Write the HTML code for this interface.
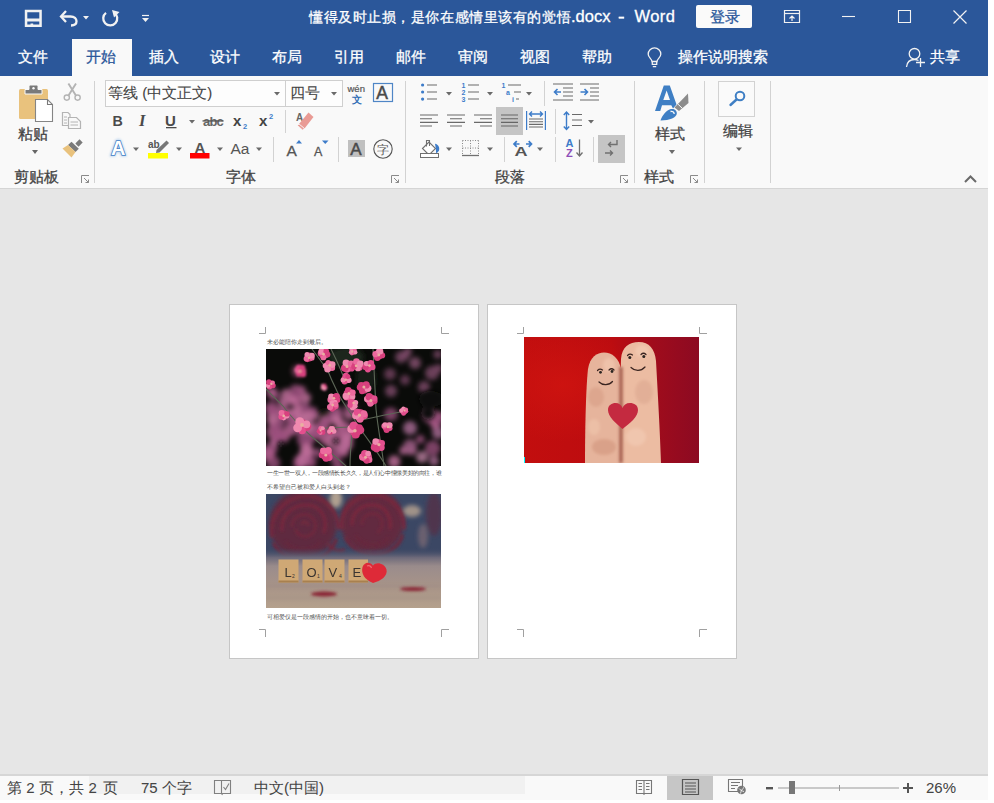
<!DOCTYPE html>
<html><head><meta charset="utf-8">
<style>
*{margin:0;padding:0;box-sizing:border-box}
html,body{width:994px;height:803px;overflow:hidden;background:#fff}
body{font-family:"Liberation Sans",sans-serif;position:relative}
.a{position:absolute}
.t{position:absolute;white-space:nowrap;line-height:1;-webkit-text-stroke-width:0.3px}
#tb{left:0;top:0;width:988px;height:76px;background:#2B579A}
.tab{color:#fff;font-size:15px;top:48.5px}
#rib{left:0;top:76px;width:988px;height:112px;background:#F9F9F9}
#ribline{left:0;top:188px;width:988px;height:1px;background:#D5D5D5}
#doc{left:0;top:189px;width:988px;height:585px;background:#E6E6E6}
#sbline{left:0;top:774px;width:988px;height:2px;background:#D6D6D6}
#sb{left:0;top:776px;width:988px;height:24px;background:#F9F9F9}
.lbl{color:#444;font-size:15px}
.sep{background:#D4D4D4;width:1px}
.dd{width:0;height:0;border-left:3px solid transparent;border-right:3px solid transparent;border-top:4px solid #666}
.page{background:#fff;border:1px solid #C6C6C6}
.cm{border-color:#8a8a8a;border-style:solid}
.pt{font-size:6px;color:#4a4a4a;line-height:1;-webkit-text-stroke-width:0}
.st{color:#444;font-size:15px;-webkit-text-stroke-width:0.05px}
svg{position:absolute;overflow:visible}
</style></head><body>

<!-- Title bar -->
<div id="tb" class="a"></div>
<div class="a" style="left:72px;top:39px;width:60px;height:37px;background:#F9F9F9"></div>
<div class="t tab" style="left:18px">文件</div>
<div class="t tab" style="left:86px;color:#2B579A">开始</div>
<div class="t tab" style="left:149px">插入</div>
<div class="t tab" style="left:210px">设计</div>
<div class="t tab" style="left:272px">布局</div>
<div class="t tab" style="left:334px">引用</div>
<div class="t tab" style="left:396px">邮件</div>
<div class="t tab" style="left:458px">审阅</div>
<div class="t tab" style="left:520px">视图</div>
<div class="t tab" style="left:582px">帮助</div>
<div class="t tab" style="left:678px">操作说明搜索</div>
<div class="t tab" style="left:929.5px">共享</div>
<div class="t" style="left:309px;top:10px;color:#fff;font-size:14px;letter-spacing:0.56px">懂得及时止损，是你在感情里该有的觉悟</div>
<div class="t" style="left:571px;top:8px;color:#fff;font-size:16.5px">.docx</div>
<div class="t" style="left:618px;top:8px;color:#fff;font-size:16.5px;transform:scaleX(1.25);transform-origin:0 0">-</div>
<div class="t" style="left:634.5px;top:8px;color:#fff;font-size:16.5px;letter-spacing:0.4px">Word</div>
<div class="a" style="left:696px;top:5px;width:56px;height:23px;background:#FAFAFA;border-radius:2px"></div>
<div class="t" style="left:710px;top:9px;color:#2B579A;font-size:15px">登录</div>

<!-- Ribbon -->
<div id="rib" class="a"></div>
<div id="ribline" class="a"></div>

<!-- Ribbon text -->
<div class="t lbl" style="left:18px;top:126px">粘贴</div>
<div class="t lbl" style="left:14px;top:169px">剪贴板</div>
<div class="t lbl" style="left:226px;top:169px">字体</div>
<div class="t lbl" style="left:495px;top:169px">段落</div>
<div class="t lbl" style="left:655px;top:126px">样式</div>
<div class="t lbl" style="left:644px;top:169px">样式</div>
<div class="t lbl" style="left:723px;top:123px">编辑</div>
<div class="a" style="left:105px;top:80px;width:181px;height:27px;background:#FDFDFD;border:1px solid #CFCFCF"></div>
<div class="a" style="left:285px;top:80px;width:58px;height:27px;background:#FDFDFD;border:1px solid #CFCFCF"></div>
<div class="t lbl" style="left:108px;top:85px;color:#444;-webkit-text-stroke-width:0.1px">等线 (中文正文)</div>
<div class="t lbl" style="left:290px;top:85px;color:#444;-webkit-text-stroke-width:0.1px">四号</div>
<div class="a" style="left:496px;top:107px;width:27px;height:28px;background:#C5C5C5"></div>
<div class="a" style="left:598px;top:135px;width:27px;height:28px;background:#C5C5C5"></div>
<div class="a" style="left:348px;top:140px;width:17px;height:17px;background:#C0C0C0"></div>
<div class="a" style="left:718px;top:81px;width:37px;height:36px;border:1px solid #D2D2D2;background:#FAFAFA"></div>


<svg width="994" height="803" style="left:0;top:0">
<!-- QAT icons -->
<g fill="none" stroke="#F2F2F2">
 <path d="M66 11L61 16.5L66 22" stroke-width="2.3"/>
 <path d="M61.5 16.5H70.5C74.5 16.5 76.5 18.8 76.5 21.3C76.5 23.8 74.5 25.5 71 25.5" stroke-width="2.3"/>
 <path d="M114.2 12.6A7 7 0 1 1 106 12.8" stroke-width="2.3"/>
 <path d="M142 15.5H149" stroke-width="1.2"/>
 <path d="M842 16.5H855" stroke-width="1.1"/>
 <path d="M898.5 10.5H910.5V22.5H898.5Z" stroke-width="1.1"/>
 <path d="M953.5 10.5L966.5 23.5M966.5 10.5L953.5 23.5" stroke-width="1.2"/>
 <path d="M784.5 10.5H799.5V22.5H784.5Z" stroke-width="1.2"/>
 <path d="M785 13.5H799" stroke-width="1.2"/>
 <path d="M792 21V16.5M789.5 18.5L792 16L794.5 18.5" stroke-width="1.2"/>
 <path d="M652 61.5C652 59 648.2 57.5 648.2 54.2A6.3 6.3 0 1 1 660.8 54.2C660.8 57.5 657 59 657 61.5Z" stroke-width="1.3"/>
 <path d="M652.3 61.5V64.3H656.7V61.5M652.8 66.6H656.2" stroke-width="1.3"/>
 <circle cx="914.5" cy="53.8" r="5.3" stroke-width="1.3"/>
 <path d="M906.5 67C907 62 910.5 59.5 914.5 59.5C916 59.5 917.5 60 918.5 60.5" stroke-width="1.3"/>
 <path d="M916 62.5H925M920.5 58V67" stroke-width="1.3"/>
</g>
<path d="M112 10L119.5 12L114 17.5Z" fill="#F2F2F2"/>
<path fill-rule="evenodd" fill="#F2F2F2" d="M24.8 9.8H41.8V27H24.8ZM27.3 12.3V18.6H39.3V12.3ZM27.3 21.4V24.5H30.5V23.5H33.2V24.5H39.3V21.4Z"/>
<path d="M83 16H89L86 19.5Z" fill="#F2F2F2"/>
<path d="M142 18H149L145.5 22Z" fill="#F2F2F2"/>

<!-- Clipboard group -->
<rect x="19" y="89" width="29" height="30" rx="1.5" fill="#E9C27D"/>
<path d="M25 89.5V94H42V89.5H38V86.5C38 85.5 37 85 36 85H31C30 85 29 85.5 29 86.5V89.5Z" fill="#7A7A7A" stroke="#F9F9F9" stroke-width="1"/>
<circle cx="33.5" cy="88.3" r="1.2" fill="#F9F9F9"/>
<path d="M35.5 99.5H47.5L52.5 104.5V121.5H35.5Z" fill="#fff" stroke="#858585" stroke-width="1.1"/>
<path d="M47.5 99.5V104.5H52.5" fill="none" stroke="#7A7A7A" stroke-width="1.1"/>
<path d="M32 150H38L35 154Z" fill="#666"/>
<g fill="none" stroke="#B4B4B4" stroke-width="1.4">
 <circle cx="66.8" cy="97.6" r="2.6"/><circle cx="77.6" cy="97.6" r="2.6"/>
 <path d="M68.5 95.5L76 83.5M75.9 95.5L68.4 83.5" stroke-width="1.9"/>
 <path d="M62.5 112.5H68L70 114.5V125.5H62.5Z" stroke-width="1.2"/>
 <path d="M68.5 117.5H76.5L80.5 121.5V128.5H68.5Z" fill="#F9F9F9" stroke-width="1.2"/>
 <path d="M64 117H67M64 120H67M64 123H67M70.5 122H78M70.5 125H78" stroke-width="1"/>
</g>
<path d="M68 145L71.5 141.8L78.8 148.8L75.5 152Z" fill="#7A7A7A"/>
<path d="M79.5 139.3L82.7 142.5L78.5 146.7L75.3 143.5Z" fill="#7A7A7A"/>
<path d="M62.5 148.5L68 145L75.5 152L71.5 157.5Z" fill="#E9C27D"/>

<!-- launchers -->
<g fill="none" stroke="#8A8A8A" stroke-width="1">
 <path d="M81.5 183V175.5H89M84 178L88.5 182.5M88.5 179.5V182.5H85.5"/>
 <path d="M391.5 183V175.5H399M394 178L398.5 182.5M398.5 179.5V182.5H395.5"/>
 <path d="M620.5 183V175.5H628M623 178L627.5 182.5M627.5 179.5V182.5H624.5"/>
 <path d="M690.5 183V175.5H698M693 178L697.5 182.5M697.5 179.5V182.5H694.5"/>
</g>

<!-- separators -->
<g fill="#D2D2D2">
 <rect x="94" y="81" width="1" height="102"/>
 <rect x="405" y="81" width="1" height="102"/>
 <rect x="634" y="81" width="1" height="102"/>
 <rect x="704" y="81" width="1" height="102"/>
 <rect x="770" y="81" width="1" height="102"/>
 <rect x="285" y="110" width="1" height="23"/>
 <rect x="273" y="137" width="1" height="25"/>
 <rect x="338" y="137" width="1" height="25"/>
 <rect x="544" y="81" width="1" height="25"/>
 <rect x="555" y="109" width="1" height="25"/>
 <rect x="504" y="137" width="1" height="25"/>
 <rect x="555" y="137" width="1" height="25"/>
 <rect x="593" y="137" width="1" height="25"/>
</g>

<!-- dropdown arrows -->
<g fill="#6A6A6A">
 <path d="M274 92H280L277 95.5Z"/>
 <path d="M331 92H337L334 95.5Z"/>
 <path d="M189 120H195L192 123.5Z"/>
 <path d="M133 147.5H139L136 151Z"/>
 <path d="M176 147.5H182L179 151Z"/>
 <path d="M217 147.5H223L220 151Z"/>
 <path d="M256 147.5H262L259 151Z"/>
 <path d="M446 92H452L449 95.5Z"/>
 <path d="M487 92H493L490 95.5Z"/>
 <path d="M526 92H532L529 95.5Z"/>
 <path d="M588 120H594L591 123.5Z"/>
 <path d="M446 147.5H452L449 151Z"/>
 <path d="M487 147.5H493L490 151Z"/>
 <path d="M537 147.5H543L540 151Z"/>
 <path d="M669 150H675L672 154Z"/>
 <path d="M736 147.5H742L739 151Z"/>
 <path d="M965 182L970.5 176.5L976 182" fill="none" stroke="#6A6A6A" stroke-width="2"/>
</g>

<!-- Font group icons -->
<text x="347.5" y="92" font-family="Liberation Sans" font-size="9.5" fill="#555" stroke="#555" stroke-width="0.2">wén</text>
<text x="352" y="102.5" font-size="10" fill="#2F6DB5" font-weight="bold">文</text>
<rect x="373.5" y="83.5" width="19" height="18" fill="none" stroke="#4F86C6" stroke-width="1.2"/>
<text x="376.3" y="99.3" font-family="Liberation Sans" font-size="17.5" fill="#4a4a4a" stroke="#4a4a4a" stroke-width="0.5">A</text>
<text x="112.6" y="125.7" font-family="Liberation Sans" font-weight="bold" font-size="15.5" fill="#4a4a4a" transform="translate(112.6 0) scale(0.92 1) translate(-112.6 0)">B</text>
<text x="139" y="125.7" font-family="Liberation Serif" font-style="italic" font-weight="bold" font-size="16.5" fill="#4a4a4a">I</text>
<text x="165" y="125.7" font-family="Liberation Sans" font-weight="bold" font-size="15" fill="#4a4a4a">U</text>
<rect x="166" y="127" width="10.5" height="1.3" fill="#4a4a4a"/>
<text x="203" y="125.5" font-family="Liberation Sans" font-weight="bold" font-size="13" fill="#666" letter-spacing="-0.8">abc</text>
<rect x="202.5" y="120.3" width="21" height="1.3" fill="#555"/>
<text x="233" y="125.5" font-family="Liberation Sans" font-weight="bold" font-size="15" fill="#444">x</text>
<text x="243" y="128.5" font-family="Liberation Sans" font-weight="bold" font-size="7.5" fill="#3D7CC9">2</text>
<text x="259" y="125.5" font-family="Liberation Sans" font-weight="bold" font-size="15" fill="#444">x</text>
<text x="269" y="118.5" font-family="Liberation Sans" font-weight="bold" font-size="7.5" fill="#3D7CC9">2</text>
<!-- eraser -->
<text x="296" y="121" font-family="Liberation Sans" font-weight="bold" font-size="10" fill="#666">A</text>
<path d="M308.5 112.5L313.5 117L304.5 128.5L299 124Z" fill="#E99A94"/>
<path d="M299 124L304.5 128.5L302.5 130L297.5 125.5Z" fill="#E99A94" stroke="#F9F9F9" stroke-width="0.8"/>
<!-- text effects A -->
<defs><filter id="glow" x="-50%" y="-50%" width="200%" height="200%"><feGaussianBlur stdDeviation="1.2"/></filter></defs>
<text x="111" y="155" font-family="Liberation Sans" font-weight="bold" font-size="20" fill="#BFD6EE" stroke="#BFD6EE" stroke-width="3" filter="url(#glow)">A</text>
<text x="111" y="155" font-family="Liberation Sans" font-weight="bold" font-size="20" fill="#FFFFFF" stroke="#3F7DC6" stroke-width="1.5" style="paint-order:stroke">A</text>
<!-- highlighter -->
<text x="148" y="147.5" font-family="Liberation Sans" font-weight="bold" font-size="10" fill="#555">ab</text>
<path d="M166.5 140.5L169 143L159.5 152.5L156 153L156.5 150Z" fill="#777"/>
<rect x="148" y="153" width="20" height="5.5" fill="#FFFF00"/>
<!-- font color -->
<text x="194.5" y="152.5" font-family="Liberation Sans" font-weight="bold" font-size="15" fill="#555">A</text>
<rect x="190" y="153" width="19.5" height="5.5" fill="#FF0000"/>
<text x="230.5" y="154" font-family="Liberation Sans" font-size="15.5" fill="#555">Aa</text>
<!-- grow / shrink -->
<text x="286.5" y="155.5" font-family="Liberation Sans" font-size="15.5" fill="#555" stroke="#555" stroke-width="0.3">A</text>
<path d="M296 143.5H302L299 140Z" fill="#3D7CC9"/>
<text x="314" y="155.5" font-family="Liberation Sans" font-size="12.5" fill="#555" stroke="#555" stroke-width="0.3">A</text>
<path d="M322 140.5H328.5L325.25 144Z" fill="#3D7CC9"/>
<text x="350.3" y="155" font-family="Liberation Sans" font-size="17" fill="#4a4a4a" stroke="#4a4a4a" stroke-width="0.5">A</text>
<circle cx="383" cy="149" r="9.2" fill="none" stroke="#555" stroke-width="1.1"/>
<text x="377" y="153.5" font-size="12" fill="#555">字</text>

<!-- Paragraph group icons -->
<g fill="#3D7CC9">
 <circle cx="422.6" cy="85" r="1.6"/><circle cx="422.6" cy="92" r="1.6"/><circle cx="422.6" cy="99.1" r="1.6"/>
</g>
<g fill="none" stroke="#6a6a6a" stroke-width="1.15">
 <path d="M427 85H437M427 92H437M427 99H437"/>
 <path d="M468 85H479M468 92H479M468 99H479"/>
 <path d="M508 85H521M514 92H521M516 99H519"/>
 <path d="M553 84H573M563 88H573M563 92H573M563 96H573M553 100H573"/>
 <path d="M580 84H599M590 88H599M590 92H599M590 96H599M580 100H599"/>
 <path d="M420 115H438M420 118.7H432M420 122.4H438M420 126H432"/>
 <path d="M447 115H465M450 118.7H462M447 122.4H465M450 126H462"/>
 <path d="M474 115H492M480 118.7H492M474 122.4H492M480 126H492"/>
 <path d="M501 115H518M501 118.7H518M501 122.4H518M501 126H518" stroke="#666"/>
 <path d="M529 119H543M529 121.7H543M529 124.4H543M529 127H543"/>
 <path d="M572 114.5H582M572 120H582M572 125.5H582"/>
</g>
<g font-family="Liberation Sans" font-weight="bold" font-size="7" fill="#3D7CC9">
 <text x="461.5" y="88">1</text><text x="461.5" y="95">2</text><text x="461.5" y="102">3</text>
 <text x="501.5" y="88">1</text><text x="506" y="95">a</text><text x="512" y="102">i</text>
</g>
<g fill="none" stroke="#3D7CC9" stroke-width="1.6">
 <path d="M561 92H554.5M557.5 89L554.5 92L557.5 95"/>
 <path d="M580.5 92H587.5M584.5 89L587.5 92L584.5 95"/>
 <path d="M526.6 111V130M545.4 111V130" stroke-width="1.2"/>
 <path d="M529.5 114H542.5M532 111.5L529.5 114L532 116.5M540 111.5L542.5 114L540 116.5" stroke-width="1.4"/>
 <path d="M566.5 112V129.5M563.8 115L566.5 112L569.2 115M563.8 126.5L566.5 129.5L569.2 126.5" stroke-width="1.4"/>
 <path d="M514 144H519.5M516.8 141.2L514 144L516.8 146.8M526 144H531.5M528.7 141.2L531.5 144L528.7 146.8" stroke-width="1.7"/>
</g>
<!-- shading -->
<path d="M422.5 148.5L429 142L435.5 148.5L429 155Z" fill="#fff" stroke="#707070" stroke-width="1.1"/>
<path d="M426.5 146.5V140.5H429.5V146" fill="none" stroke="#707070" stroke-width="1.1"/>
<path d="M435 143.8C438.5 144.3 440.2 148 438.8 151L436.2 153.8L435.8 148.5Z" fill="#3D7CC9"/>
<rect x="420.5" y="153.5" width="18" height="4" fill="#fff" stroke="#707070" stroke-width="1"/>
<!-- borders -->
<g fill="none" stroke="#8A8A8A" stroke-width="1" stroke-dasharray="1 1.5">
 <path d="M462.5 140.5H478.5M462.5 148H478.5M462.5 140.5V155M470.5 140.5V155M478.5 140.5V155"/>
</g>
<path d="M462 155.5H479" stroke="#707070" stroke-width="1.3"/>
<!-- asian layout -->
<text x="514.5" y="156" font-family="Liberation Sans" font-weight="bold" font-size="12.5" fill="#555" transform="translate(514.5 0) scale(1.45 1) translate(-514.5 0)">A</text>
<!-- sort -->
<text x="565.5" y="147.3" font-family="Liberation Sans" font-weight="bold" font-size="11" fill="#3D7CC9">A</text>
<text x="566" y="157.2" font-family="Liberation Sans" font-weight="bold" font-size="11" fill="#8E4EB8">Z</text>
<path d="M579.5 139.5V156M576.5 152.5L579.5 156L582.5 152.5" fill="none" stroke="#707070" stroke-width="1.3"/>
<!-- show marks -->
<path d="M617 140V144.5H608.5M611 142L608.5 144.5L611 147" fill="none" stroke="#707070" stroke-width="1.4"/>
<path d="M605 153H612.5M610 150.5L612.5 153L610 155.5" fill="none" stroke="#707070" stroke-width="1.4"/>

<!-- Styles -->
<path fill-rule="evenodd" d="M655 111L663.8 85.4H669.8L676.5 104.5L673 108.5L671.3 105.3H662L660.3 111Z M663.3 100L666.6 90.5L670 100Z" fill="#3F7FC4"/>
<path d="M688 93.5L688.5 103L679 111L674.5 107.5Z" fill="#8C8C8C"/>
<path d="M678 104.2L682.2 108.2" stroke="#F9F9F9" stroke-width="1"/>
<path d="M660.5 120.5C662 116 665.5 111 669.5 109.5C673.5 108 677 110 676.8 113.5C676.5 117.5 670 120.5 660.5 120.5Z" fill="#3F7FC4"/>
<path d="M670.5 111.5C672.5 111 674 112 674.2 114" stroke="#F9F9F9" stroke-width="1.3" fill="none"/>
<!-- editing magnifier -->
<circle cx="740" cy="96" r="4.3" fill="none" stroke="#3F7FC4" stroke-width="2"/>
<path d="M736.5 99.5L730.5 105" stroke="#3F7FC4" stroke-width="2.4" stroke-linecap="round"/>
</svg>

<!-- Document area -->
<div id="doc" class="a"></div>
<div class="a page" style="left:229px;top:304px;width:250px;height:355px"></div>
<div class="a page" style="left:487px;top:304px;width:250px;height:355px"></div>

<!-- Page contents -->
<svg width="994" height="803" style="left:0;top:0">
<g fill="none" stroke="#A0A0A0" stroke-width="1">
 <path d="M259 333.5H265.5V327"/>
 <path d="M441.5 327V333.5H449"/>
 <path d="M259 629.5H265.5V637" />
 <path d="M441.5 637V629.5H449"/>
 <path d="M517 333.5H523.5V327"/>
 <path d="M699.5 327V333.5H707"/>
 <path d="M517 629.5H523.5V637"/>
 <path d="M699.5 637V629.5H707"/>
</g>
</svg>

<!-- Photo 1: plum blossoms -->
<svg viewBox="0 0 175 117" style="left:266px;top:349px;overflow:hidden" width="175" height="117">
<defs><filter id="pb1" x="-50%" y="-50%" width="200%" height="200%"><feGaussianBlur stdDeviation="2.6"/></filter><filter id="pb2" x="-50%" y="-50%" width="200%" height="200%"><feGaussianBlur stdDeviation="1.2"/></filter><filter id="pb3" x="-50%" y="-50%" width="200%" height="200%"><feGaussianBlur stdDeviation="0.45"/></filter></defs>
<rect width="175" height="117" fill="#0a0b09"/>
<g filter="url(#pb1)"><ellipse cx="80" cy="8" rx="18" ry="10" fill="#1a281c"/><ellipse cx="100" cy="30" rx="10" ry="14" fill="#131c14"/><ellipse cx="60" cy="70" rx="10" ry="10" fill="#14140f"/></g>
<g filter="url(#pb1)">
<circle cx="27.5" cy="66.9" r="6.6" fill="#ad5c8a" opacity="0.85"/>
<circle cx="69.8" cy="63.6" r="6.3" fill="#b86a96" opacity="0.85"/>
<circle cx="18.2" cy="63.1" r="5.7" fill="#9a4f7c" opacity="0.85"/>
<circle cx="7.7" cy="83.0" r="7.3" fill="#ad5c8a" opacity="0.85"/>
<circle cx="80.5" cy="95.2" r="6.3" fill="#ad5c8a" opacity="0.85"/>
<circle cx="49.1" cy="81.4" r="7.9" fill="#ad5c8a" opacity="0.85"/>
<circle cx="47.3" cy="65.9" r="5.7" fill="#b86a96" opacity="0.85"/>
<circle cx="10.0" cy="76.2" r="7.3" fill="#9a4f7c" opacity="0.85"/>
<circle cx="8.8" cy="91.7" r="4.8" fill="#ad5c8a" opacity="0.85"/>
<circle cx="46.6" cy="61.7" r="4.2" fill="#9a4f7c" opacity="0.85"/>
<circle cx="42.2" cy="89.4" r="7.1" fill="#8e4a74" opacity="0.85"/>
<circle cx="49.8" cy="84.7" r="5.2" fill="#9a4f7c" opacity="0.85"/>
<circle cx="59.4" cy="72.4" r="6.3" fill="#b86a96" opacity="0.85"/>
<circle cx="42.1" cy="78.3" r="5.8" fill="#b86a96" opacity="0.85"/>
<circle cx="83.3" cy="65.0" r="5.7" fill="#bc6c98" opacity="0.85"/>
<circle cx="12.9" cy="86.8" r="4.2" fill="#ad5c8a" opacity="0.85"/>
<circle cx="65.0" cy="91.8" r="7.5" fill="#bc6c98" opacity="0.85"/>
<circle cx="28.9" cy="78.7" r="6.0" fill="#8e4a74" opacity="0.85"/>
<circle cx="5.8" cy="63.5" r="5.1" fill="#ad5c8a" opacity="0.85"/>
<circle cx="5.2" cy="99.4" r="6.6" fill="#8e4a74" opacity="0.85"/>
<circle cx="24.2" cy="80.8" r="6.7" fill="#ad5c8a" opacity="0.85"/>
<circle cx="80.0" cy="79.0" r="6.4" fill="#8e4a74" opacity="0.85"/>
<circle cx="5.0" cy="103.3" r="4.5" fill="#9a4f7c" opacity="0.85"/>
<circle cx="33.8" cy="112.1" r="6.0" fill="#9a4f7c" opacity="0.85"/>
<circle cx="38.2" cy="90.4" r="7.5" fill="#8e4a74" opacity="0.85"/>
<circle cx="73.4" cy="74.4" r="5.7" fill="#bc6c98" opacity="0.85"/>
<circle cx="58.0" cy="80.4" r="4.9" fill="#ad5c8a" opacity="0.85"/>
<circle cx="15.0" cy="71.7" r="4.9" fill="#8e4a74" opacity="0.85"/>
<circle cx="70.6" cy="68.8" r="5.1" fill="#9a4f7c" opacity="0.85"/>
<circle cx="35.6" cy="79.8" r="6.3" fill="#9a4f7c" opacity="0.85"/>
<circle cx="58.7" cy="88.4" r="6.5" fill="#ad5c8a" opacity="0.85"/>
<circle cx="38.8" cy="109.4" r="7.8" fill="#b86a96" opacity="0.85"/>
<circle cx="33.4" cy="81.5" r="4.4" fill="#8e4a74" opacity="0.85"/>
<circle cx="5.3" cy="62.0" r="4.8" fill="#9a4f7c" opacity="0.85"/>
<circle cx="9.3" cy="93.4" r="4.4" fill="#b86a96" opacity="0.85"/>
<circle cx="12.9" cy="64.0" r="5.5" fill="#ad5c8a" opacity="0.85"/>
<circle cx="6.0" cy="70.3" r="5.5" fill="#bc6c98" opacity="0.85"/>
<circle cx="81.2" cy="93.5" r="5.9" fill="#ad5c8a" opacity="0.85"/>
<circle cx="72.2" cy="116.6" r="5.9" fill="#8e4a74" opacity="0.85"/>
<circle cx="26.5" cy="66.5" r="7.0" fill="#bc6c98" opacity="0.85"/>
<circle cx="40.7" cy="98.8" r="6.1" fill="#9a4f7c" opacity="0.85"/>
<circle cx="80.8" cy="89.2" r="4.6" fill="#b86a96" opacity="0.85"/>
<circle cx="77.7" cy="102.7" r="5.2" fill="#ad5c8a" opacity="0.85"/>
<circle cx="59.2" cy="73.4" r="5.5" fill="#9a4f7c" opacity="0.85"/>
<circle cx="30.2" cy="71.1" r="6.2" fill="#b86a96" opacity="0.85"/>
<circle cx="28.0" cy="71.2" r="7.2" fill="#9a4f7c" opacity="0.85"/>
<circle cx="68.5" cy="106.3" r="7.0" fill="#9a4f7c" opacity="0.85"/>
<circle cx="17.0" cy="87.1" r="6.9" fill="#ad5c8a" opacity="0.85"/>
<circle cx="67.2" cy="85.9" r="4.8" fill="#b86a96" opacity="0.85"/>
<circle cx="81.3" cy="84.4" r="7.7" fill="#bc6c98" opacity="0.85"/>
<circle cx="81.2" cy="79.5" r="4.9" fill="#9a4f7c" opacity="0.85"/>
<circle cx="40.0" cy="77.9" r="5.9" fill="#b86a96" opacity="0.85"/>
<circle cx="71.4" cy="86.3" r="6.6" fill="#ad5c8a" opacity="0.85"/>
<circle cx="70.9" cy="65.1" r="5.6" fill="#9a4f7c" opacity="0.85"/>
<circle cx="40.6" cy="68.5" r="7.2" fill="#bc6c98" opacity="0.85"/>
<circle cx="7.4" cy="113.8" r="6.9" fill="#8e4a74" opacity="0.85"/>
<circle cx="34.1" cy="113.9" r="6.9" fill="#9a4f7c" opacity="0.85"/>
<circle cx="84.4" cy="59.6" r="6.4" fill="#8e4a74" opacity="0.85"/>
<circle cx="68.6" cy="66.6" r="7.3" fill="#8e4a74" opacity="0.85"/>
<circle cx="55.9" cy="78.7" r="6.2" fill="#9a4f7c" opacity="0.85"/>
<circle cx="1.8" cy="105.2" r="6.9" fill="#ad5c8a" opacity="0.85"/>
<circle cx="44.8" cy="113.1" r="5.7" fill="#9a4f7c" opacity="0.85"/>
<circle cx="70.2" cy="70.5" r="5.0" fill="#bc6c98" opacity="0.85"/>
<circle cx="42.6" cy="103.1" r="5.3" fill="#b86a96" opacity="0.85"/>
<circle cx="35.6" cy="65.7" r="7.6" fill="#bc6c98" opacity="0.85"/>
<circle cx="76.3" cy="97.1" r="7.3" fill="#b86a96" opacity="0.85"/>
<circle cx="35.8" cy="112.1" r="6.0" fill="#b86a96" opacity="0.85"/>
<circle cx="12.9" cy="88.1" r="7.5" fill="#9a4f7c" opacity="0.85"/>
<circle cx="51.7" cy="103.8" r="4.6" fill="#9a4f7c" opacity="0.85"/>
<circle cx="40.2" cy="100.8" r="6.2" fill="#bc6c98" opacity="0.85"/>
<circle cx="27.3" cy="51.7" r="5.4" fill="#ad5c8a" opacity="0.85"/>
<circle cx="35.3" cy="41.3" r="4.6" fill="#ad5c8a" opacity="0.85"/>
<circle cx="30.9" cy="51.2" r="5.7" fill="#ad5c8a" opacity="0.85"/>
<circle cx="17.7" cy="53.5" r="5.5" fill="#b86a96" opacity="0.85"/>
<circle cx="8.0" cy="46.1" r="5.5" fill="#8e4a74" opacity="0.85"/>
<circle cx="20.3" cy="45.4" r="5.6" fill="#bc6c98" opacity="0.85"/>
<circle cx="36.9" cy="59.6" r="4.6" fill="#8e4a74" opacity="0.85"/>
<circle cx="5.5" cy="42.7" r="5.3" fill="#ad5c8a" opacity="0.85"/>
<circle cx="26.8" cy="49.4" r="4.6" fill="#bc6c98" opacity="0.85"/>
<circle cx="31.4" cy="59.7" r="4.5" fill="#bc6c98" opacity="0.85"/>
<circle cx="5.7" cy="59.4" r="6.9" fill="#9a4f7c" opacity="0.85"/>
<circle cx="29.9" cy="42.1" r="6.7" fill="#9a4f7c" opacity="0.85"/>
<circle cx="39.6" cy="58.3" r="4.5" fill="#8e4a74" opacity="0.85"/>
<circle cx="39.8" cy="48.9" r="5.3" fill="#bc6c98" opacity="0.85"/>
<circle cx="137.5" cy="101.7" r="4.1" fill="#b86a96" opacity="0.85"/>
<circle cx="145.2" cy="100.7" r="5.5" fill="#b86a96" opacity="0.85"/>
<circle cx="154.3" cy="90.2" r="4.3" fill="#9a4f7c" opacity="0.85"/>
<circle cx="173.4" cy="67.8" r="5.1" fill="#ad5c8a" opacity="0.85"/>
<circle cx="169.8" cy="72.0" r="7.0" fill="#8e4a74" opacity="0.85"/>
<circle cx="166.7" cy="99.2" r="7.8" fill="#8e4a74" opacity="0.85"/>
<circle cx="128.2" cy="112.6" r="6.3" fill="#bc6c98" opacity="0.85"/>
<circle cx="124.9" cy="65.2" r="6.8" fill="#8e4a74" opacity="0.85"/>
<circle cx="169.2" cy="76.8" r="4.1" fill="#ad5c8a" opacity="0.85"/>
<circle cx="164.1" cy="66.6" r="7.4" fill="#ad5c8a" opacity="0.85"/>
<circle cx="141.9" cy="2.4" r="4.0" fill="#84506e" opacity="0.85"/>
<circle cx="171.7" cy="5.4" r="4.3" fill="#7a4866" opacity="0.85"/>
<circle cx="172.2" cy="19.4" r="4.5" fill="#7a4866" opacity="0.85"/>
<circle cx="139.1" cy="6.2" r="4.6" fill="#7a4866" opacity="0.85"/>
<circle cx="135.0" cy="8.0" r="6.0" fill="#7a4866" opacity="0.85"/>
<circle cx="149.0" cy="14.0" r="6.0" fill="#84506e" opacity="0.85"/>
<circle cx="166.0" cy="24.0" r="7.0" fill="#7a4866" opacity="0.85"/>
<circle cx="124.0" cy="25.0" r="6.0" fill="#6e3f5c" opacity="0.85"/>
<circle cx="125.0" cy="42.0" r="6.0" fill="#7a4866" opacity="0.85"/>
<circle cx="139.0" cy="31.0" r="5.0" fill="#6e3f5c" opacity="0.85"/>
<circle cx="158.0" cy="38.0" r="6.0" fill="#7a4866" opacity="0.85"/>
<circle cx="144.0" cy="79.0" r="7.0" fill="#a36890" opacity="0.85"/>
<circle cx="144.0" cy="97.0" r="7.0" fill="#94587e" opacity="0.85"/>
<circle cx="172.0" cy="84.0" r="6.0" fill="#a36890" opacity="0.85"/>
<circle cx="156.0" cy="108.0" r="6.0" fill="#b07898" opacity="0.85"/>
<circle cx="168.0" cy="112.0" r="5.0" fill="#a36890" opacity="0.85"/>
<circle cx="32.0" cy="22.0" r="6.0" fill="#9a4a70" opacity="0.85"/>
</g>
<g filter="url(#pb1)" fill="#0d0c0b"><circle cx="15" cy="95" r="3"/><circle cx="70" cy="92" r="3"/><circle cx="162" cy="64" r="7"/><ellipse cx="165" cy="50" rx="12" ry="8"/></g>
<g fill="none" stroke="#5c6656" stroke-width="1.1" stroke-linecap="round" filter="url(#pb3)">
<path d="M0 40C8 48 14 54 17 57C25 68 35 78 45 87C58 98 70 108 80 117"/>
<path d="M46 0C52 8 58 16 62 22C65 30 68 36 70 40C74 50 82 60 88 70C96 84 110 100 120 117"/>
<path d="M65 0C70 10 76 22 80 35"/>
<path d="M107 0C108 20 109 40 110 60C112 80 116 100 118 117"/>
<path d="M84 117C84 105 85 95 86 85"/>
<path d="M58 79C66 79 75 78 83 78"/>
<path d="M95 71C110 68 122 65 135 63"/>
</g>
<g filter="url(#pb3)">
<circle cx="43" cy="8" r="4.6" fill="#d44a82"/>
<circle cx="46.0" cy="8.9" r="2.6" fill="#ec6a9e"/>
<circle cx="41.5" cy="10.8" r="2.4" fill="#d8407e"/>
<circle cx="40.4" cy="9.8" r="2.8" fill="#ec6a9e"/>
<circle cx="41.0" cy="5.6" r="2.5" fill="#f08ab0"/>
<circle cx="45.9" cy="6.7" r="2.9" fill="#f08ab0"/>
<circle cx="43.1" cy="8.8" r="1.3" fill="#e8b0a0"/>
</g>
<g filter="url(#pb2)">
<circle cx="35" cy="22" r="5.1" fill="#d44a82"/>
<circle cx="37.0" cy="24.9" r="3.2" fill="#d8407e"/>
<circle cx="32.8" cy="24.7" r="2.8" fill="#d8407e"/>
<circle cx="31.6" cy="21.1" r="3.0" fill="#ec6a9e"/>
<circle cx="33.1" cy="19.1" r="3.3" fill="#e4508e"/>
<circle cx="36.1" cy="18.7" r="3.0" fill="#d8407e"/>
<circle cx="34.1" cy="22.3" r="1.4" fill="#e8b0a0"/>
</g>
<g filter="url(#pb3)">
<circle cx="4.5" cy="35.5" r="4.1" fill="#d44a82"/>
<circle cx="7.1" cy="36.6" r="2.6" fill="#d8407e"/>
<circle cx="3.4" cy="38.1" r="2.5" fill="#e4508e"/>
<circle cx="2.0" cy="36.8" r="2.2" fill="#f08ab0"/>
<circle cx="2.9" cy="33.1" r="2.8" fill="#d8407e"/>
<circle cx="6.7" cy="33.6" r="2.2" fill="#ec6a9e"/>
<circle cx="5.3" cy="34.9" r="1.1" fill="#e8b0a0"/>
</g>
<g filter="url(#pb3)">
<circle cx="58" cy="5" r="5.1" fill="#d44a82"/>
<circle cx="61.4" cy="5.6" r="3.0" fill="#d8407e"/>
<circle cx="57.4" cy="8.4" r="2.9" fill="#ec6a9e"/>
<circle cx="54.6" cy="4.5" r="2.9" fill="#e4508e"/>
<circle cx="55.4" cy="2.7" r="3.1" fill="#f08ab0"/>
<circle cx="60.3" cy="2.4" r="2.9" fill="#d8407e"/>
<circle cx="57.5" cy="5.2" r="1.4" fill="#e8b0a0"/>
</g>
<g filter="url(#pb3)">
<circle cx="63" cy="17" r="5.1" fill="#d44a82"/>
<circle cx="66.0" cy="18.8" r="3.2" fill="#ec6a9e"/>
<circle cx="61.6" cy="20.2" r="3.3" fill="#f08ab0"/>
<circle cx="59.5" cy="16.7" r="2.8" fill="#f08ab0"/>
<circle cx="62.2" cy="13.6" r="2.7" fill="#ec6a9e"/>
<circle cx="66.2" cy="15.6" r="3.3" fill="#f08ab0"/>
<circle cx="63.6" cy="16.3" r="1.4" fill="#e8b0a0"/>
</g>
<g filter="url(#pb3)">
<circle cx="82" cy="17" r="5.5" fill="#d44a82"/>
<circle cx="85.3" cy="18.9" r="3.6" fill="#e4508e"/>
<circle cx="81.0" cy="20.7" r="3.0" fill="#ec6a9e"/>
<circle cx="78.8" cy="19.1" r="3.8" fill="#d8407e"/>
<circle cx="80.0" cy="13.8" r="3.4" fill="#f08ab0"/>
<circle cx="85.1" cy="14.8" r="3.3" fill="#ec6a9e"/>
<circle cx="81.0" cy="17.6" r="1.5" fill="#e8b0a0"/>
</g>
<g filter="url(#pb3)">
<circle cx="91" cy="16" r="5.1" fill="#d44a82"/>
<circle cx="93.5" cy="18.4" r="3.2" fill="#e4508e"/>
<circle cx="91.9" cy="19.4" r="2.9" fill="#f08ab0"/>
<circle cx="88.0" cy="17.8" r="2.8" fill="#d8407e"/>
<circle cx="90.4" cy="12.6" r="3.3" fill="#ec6a9e"/>
<circle cx="94.3" cy="15.0" r="3.4" fill="#f08ab0"/>
<circle cx="90.2" cy="16.8" r="1.4" fill="#e8b0a0"/>
</g>
<g filter="url(#pb3)">
<circle cx="103" cy="17" r="5.1" fill="#d44a82"/>
<circle cx="106.3" cy="18.0" r="3.2" fill="#e4508e"/>
<circle cx="101.9" cy="20.3" r="3.1" fill="#e4508e"/>
<circle cx="99.7" cy="18.0" r="3.2" fill="#d8407e"/>
<circle cx="100.5" cy="14.6" r="2.7" fill="#f08ab0"/>
<circle cx="104.9" cy="14.1" r="3.2" fill="#e4508e"/>
<circle cx="103.4" cy="16.6" r="1.4" fill="#e8b0a0"/>
</g>
<g filter="url(#pb3)">
<circle cx="87" cy="2" r="3.7" fill="#d44a82"/>
<circle cx="89.2" cy="3.2" r="2.2" fill="#f08ab0"/>
<circle cx="85.9" cy="4.3" r="2.1" fill="#ec6a9e"/>
<circle cx="84.8" cy="3.3" r="1.9" fill="#f08ab0"/>
<circle cx="85.8" cy="-0.2" r="2.5" fill="#f08ab0"/>
<circle cx="88.6" cy="0.1" r="2.0" fill="#ec6a9e"/>
<circle cx="86.2" cy="2.5" r="1.0" fill="#e8b0a0"/>
</g>
<g filter="url(#pb3)">
<circle cx="113" cy="5.5" r="5.1" fill="#d44a82"/>
<circle cx="116.4" cy="6.4" r="2.8" fill="#d8407e"/>
<circle cx="111.3" cy="8.5" r="3.4" fill="#d8407e"/>
<circle cx="109.5" cy="5.2" r="3.1" fill="#ec6a9e"/>
<circle cx="112.8" cy="2.0" r="2.7" fill="#f08ab0"/>
<circle cx="114.1" cy="2.2" r="3.2" fill="#f08ab0"/>
<circle cx="112.8" cy="6.0" r="1.4" fill="#e8b0a0"/>
</g>
<g filter="url(#pb3)">
<circle cx="80" cy="30" r="4.6" fill="#d44a82"/>
<circle cx="82.9" cy="31.3" r="2.7" fill="#f08ab0"/>
<circle cx="78.4" cy="32.7" r="2.7" fill="#e4508e"/>
<circle cx="77.0" cy="30.9" r="2.5" fill="#f08ab0"/>
<circle cx="79.9" cy="26.8" r="3.1" fill="#e4508e"/>
<circle cx="81.8" cy="27.4" r="2.5" fill="#d8407e"/>
<circle cx="79.8" cy="30.7" r="1.3" fill="#e8b0a0"/>
</g>
<g filter="url(#pb3)">
<circle cx="98" cy="39" r="5.5" fill="#d44a82"/>
<circle cx="101.8" cy="39.3" r="3.6" fill="#f08ab0"/>
<circle cx="96.0" cy="42.3" r="3.0" fill="#d8407e"/>
<circle cx="94.3" cy="38.2" r="3.5" fill="#d8407e"/>
<circle cx="95.3" cy="36.3" r="3.3" fill="#d8407e"/>
<circle cx="100.2" cy="35.9" r="3.6" fill="#d8407e"/>
<circle cx="97.9" cy="38.1" r="1.5" fill="#e8b0a0"/>
</g>
<g filter="url(#pb3)">
<circle cx="83" cy="45" r="5.5" fill="#d44a82"/>
<circle cx="85.7" cy="47.6" r="3.7" fill="#f08ab0"/>
<circle cx="80.8" cy="48.1" r="3.5" fill="#ec6a9e"/>
<circle cx="79.8" cy="47.1" r="3.3" fill="#f08ab0"/>
<circle cx="82.3" cy="41.3" r="3.3" fill="#d8407e"/>
<circle cx="86.6" cy="43.7" r="3.1" fill="#ec6a9e"/>
<circle cx="82.8" cy="44.6" r="1.5" fill="#e8b0a0"/>
</g>
<g filter="url(#pb3)">
<circle cx="68" cy="50" r="5.1" fill="#d44a82"/>
<circle cx="71.4" cy="50.9" r="3.0" fill="#d8407e"/>
<circle cx="68.3" cy="53.5" r="3.1" fill="#f08ab0"/>
<circle cx="64.6" cy="50.8" r="3.2" fill="#ec6a9e"/>
<circle cx="65.3" cy="47.7" r="3.1" fill="#f08ab0"/>
<circle cx="70.4" cy="47.5" r="3.5" fill="#d8407e"/>
<circle cx="67.9" cy="49.3" r="1.4" fill="#e8b0a0"/>
</g>
<g filter="url(#pb3)">
<circle cx="67" cy="57" r="4.6" fill="#d44a82"/>
<circle cx="70.1" cy="57.6" r="2.5" fill="#e4508e"/>
<circle cx="66.2" cy="60.1" r="2.6" fill="#d8407e"/>
<circle cx="64.1" cy="58.1" r="3.1" fill="#ec6a9e"/>
<circle cx="66.4" cy="53.9" r="2.7" fill="#f08ab0"/>
<circle cx="69.8" cy="55.5" r="2.7" fill="#ec6a9e"/>
<circle cx="66.7" cy="56.1" r="1.3" fill="#e8b0a0"/>
</g>
<g filter="url(#pb3)">
<circle cx="105" cy="51" r="5.5" fill="#d44a82"/>
<circle cx="108.6" cy="52.0" r="3.0" fill="#d8407e"/>
<circle cx="104.3" cy="54.7" r="3.0" fill="#ec6a9e"/>
<circle cx="101.3" cy="50.0" r="3.3" fill="#f08ab0"/>
<circle cx="103.2" cy="47.7" r="3.7" fill="#d8407e"/>
<circle cx="108.5" cy="49.6" r="3.0" fill="#e4508e"/>
<circle cx="104.9" cy="51.5" r="1.5" fill="#e8b0a0"/>
</g>
<g filter="url(#pb3)">
<circle cx="87" cy="55" r="4.6" fill="#d44a82"/>
<circle cx="89.2" cy="57.3" r="2.4" fill="#f08ab0"/>
<circle cx="86.8" cy="58.2" r="3.1" fill="#f08ab0"/>
<circle cx="84.1" cy="56.2" r="2.6" fill="#e4508e"/>
<circle cx="84.8" cy="52.8" r="3.1" fill="#e4508e"/>
<circle cx="89.7" cy="53.4" r="2.5" fill="#f08ab0"/>
<circle cx="87.6" cy="54.0" r="1.3" fill="#e8b0a0"/>
</g>
<g filter="url(#pb3)">
<circle cx="94" cy="66" r="6.0" fill="#d44a82"/>
<circle cx="98.1" cy="66.5" r="3.8" fill="#e4508e"/>
<circle cx="94.0" cy="70.1" r="3.7" fill="#ec6a9e"/>
<circle cx="89.9" cy="66.4" r="3.8" fill="#f08ab0"/>
<circle cx="91.0" cy="63.2" r="3.4" fill="#e4508e"/>
<circle cx="97.9" cy="64.7" r="3.5" fill="#ec6a9e"/>
<circle cx="93.4" cy="66.2" r="1.6" fill="#e8b0a0"/>
</g>
<g filter="url(#pb3)">
<circle cx="89.5" cy="81" r="6.4" fill="#d44a82"/>
<circle cx="93.9" cy="81.0" r="4.4" fill="#d8407e"/>
<circle cx="89.7" cy="85.4" r="4.1" fill="#d8407e"/>
<circle cx="85.2" cy="79.9" r="3.9" fill="#f08ab0"/>
<circle cx="87.8" cy="76.9" r="4.4" fill="#e4508e"/>
<circle cx="93.3" cy="78.7" r="3.4" fill="#d8407e"/>
<circle cx="88.9" cy="81.8" r="1.8" fill="#e8b0a0"/>
</g>
<g filter="url(#pb3)">
<circle cx="112" cy="96" r="6.0" fill="#d44a82"/>
<circle cx="115.3" cy="98.5" r="3.4" fill="#e4508e"/>
<circle cx="110.6" cy="99.9" r="3.4" fill="#d8407e"/>
<circle cx="108.6" cy="98.3" r="3.8" fill="#d8407e"/>
<circle cx="109.7" cy="92.6" r="3.3" fill="#f08ab0"/>
<circle cx="115.7" cy="94.2" r="3.3" fill="#e4508e"/>
<circle cx="112.9" cy="95.6" r="1.6" fill="#e8b0a0"/>
</g>
<g filter="url(#pb3)">
<circle cx="100.5" cy="108" r="5.5" fill="#d44a82"/>
<circle cx="103.1" cy="110.8" r="3.3" fill="#ec6a9e"/>
<circle cx="100.7" cy="111.8" r="3.0" fill="#d8407e"/>
<circle cx="96.7" cy="108.0" r="3.7" fill="#ec6a9e"/>
<circle cx="98.8" cy="104.6" r="3.7" fill="#e4508e"/>
<circle cx="102.2" cy="104.6" r="2.9" fill="#f08ab0"/>
<circle cx="99.5" cy="108.2" r="1.5" fill="#e8b0a0"/>
</g>
<g filter="url(#pb3)">
<circle cx="121" cy="78" r="4.6" fill="#d44a82"/>
<circle cx="123.9" cy="79.3" r="2.6" fill="#e4508e"/>
<circle cx="120.6" cy="81.1" r="3.0" fill="#d8407e"/>
<circle cx="118.1" cy="76.9" r="2.7" fill="#ec6a9e"/>
<circle cx="118.8" cy="75.7" r="2.4" fill="#f08ab0"/>
<circle cx="123.6" cy="76.2" r="3.0" fill="#f08ab0"/>
<circle cx="122.0" cy="77.9" r="1.3" fill="#e8b0a0"/>
</g>
<g filter="url(#pb3)">
<circle cx="137.7" cy="62" r="3.7" fill="#d44a82"/>
<circle cx="140.2" cy="62.3" r="2.1" fill="#e4508e"/>
<circle cx="137.6" cy="64.5" r="2.3" fill="#e4508e"/>
<circle cx="135.2" cy="61.7" r="2.1" fill="#f08ab0"/>
<circle cx="137.4" cy="59.5" r="2.0" fill="#f08ab0"/>
<circle cx="139.9" cy="60.7" r="2.2" fill="#ec6a9e"/>
<circle cx="138.5" cy="61.4" r="1.0" fill="#e8b0a0"/>
</g>
<g filter="url(#pb3)">
<circle cx="18" cy="66" r="4.6" fill="#d44a82"/>
<circle cx="21.0" cy="67.1" r="2.4" fill="#f08ab0"/>
<circle cx="17.7" cy="69.1" r="2.4" fill="#f08ab0"/>
<circle cx="15.4" cy="67.8" r="3.0" fill="#e4508e"/>
<circle cx="15.6" cy="64.0" r="3.0" fill="#ec6a9e"/>
<circle cx="21.0" cy="64.9" r="2.7" fill="#d8407e"/>
<circle cx="17.7" cy="66.9" r="1.3" fill="#e8b0a0"/>
</g>
<g filter="url(#pb3)">
<circle cx="36" cy="77" r="6.9" fill="#d44a82"/>
<circle cx="40.7" cy="77.2" r="4.7" fill="#d8407e"/>
<circle cx="36.1" cy="81.7" r="3.6" fill="#e4508e"/>
<circle cx="31.6" cy="78.8" r="4.4" fill="#f08ab0"/>
<circle cx="33.8" cy="72.8" r="4.5" fill="#f08ab0"/>
<circle cx="40.5" cy="75.4" r="3.8" fill="#f08ab0"/>
<circle cx="36.0" cy="76.0" r="1.9" fill="#e8b0a0"/>
</g>
<g filter="url(#pb3)">
<circle cx="55.5" cy="81.5" r="3.7" fill="#d44a82"/>
<circle cx="57.0" cy="83.5" r="2.4" fill="#d8407e"/>
<circle cx="54.4" cy="83.8" r="2.1" fill="#ec6a9e"/>
<circle cx="53.1" cy="82.3" r="2.4" fill="#d8407e"/>
<circle cx="54.6" cy="79.1" r="2.2" fill="#ec6a9e"/>
<circle cx="56.7" cy="79.2" r="2.0" fill="#f08ab0"/>
<circle cx="54.6" cy="81.6" r="1.0" fill="#e8b0a0"/>
</g>
<g filter="url(#pb3)">
<circle cx="65.5" cy="81.5" r="3.7" fill="#d44a82"/>
<circle cx="67.9" cy="82.3" r="2.5" fill="#f08ab0"/>
<circle cx="63.9" cy="83.5" r="2.3" fill="#d8407e"/>
<circle cx="63.2" cy="82.5" r="2.2" fill="#f08ab0"/>
<circle cx="64.9" cy="79.0" r="2.0" fill="#f08ab0"/>
<circle cx="66.6" cy="79.2" r="2.3" fill="#f08ab0"/>
<circle cx="65.8" cy="82.0" r="1.0" fill="#e8b0a0"/>
</g>
<g filter="url(#pb3)">
<circle cx="60" cy="105" r="6.0" fill="#d44a82"/>
<circle cx="62.7" cy="108.1" r="3.9" fill="#e4508e"/>
<circle cx="60.1" cy="109.1" r="3.7" fill="#d8407e"/>
<circle cx="56.0" cy="106.0" r="3.3" fill="#d8407e"/>
<circle cx="57.4" cy="101.8" r="3.4" fill="#ec6a9e"/>
<circle cx="62.3" cy="101.6" r="3.5" fill="#ec6a9e"/>
<circle cx="59.8" cy="106.0" r="1.6" fill="#e8b0a0"/>
</g>
<g filter="url(#pb2)">
<circle cx="58" cy="38" r="2.8" fill="#d44a82"/>
<circle cx="59.7" cy="38.9" r="1.7" fill="#ec6a9e"/>
<circle cx="58.4" cy="39.9" r="1.9" fill="#f08ab0"/>
<circle cx="56.4" cy="39.0" r="1.8" fill="#f08ab0"/>
<circle cx="56.8" cy="36.6" r="1.9" fill="#f08ab0"/>
<circle cx="58.7" cy="36.2" r="1.6" fill="#d8407e"/>
<circle cx="57.1" cy="38.2" r="0.8" fill="#e8b0a0"/>
</g>
</svg>
<!-- Photo 2: LOVE -->
<svg viewBox="0 0 175 114" style="left:266px;top:494px;overflow:hidden" width="175" height="114">
<defs>
 <filter id="c1" x="-50%" y="-50%" width="200%" height="200%"><feGaussianBlur stdDeviation="2.2"/></filter>
 <filter id="c3" x="-50%" y="-50%" width="200%" height="200%"><feGaussianBlur stdDeviation="1.5"/></filter>
 <filter id="c2" x="-20%" y="-20%" width="140%" height="140%"><feGaussianBlur stdDeviation="0.45"/></filter>
 <linearGradient id="tbl" x1="0" y1="0" x2="0" y2="1">
  <stop offset="0" stop-color="#3e4a66" stop-opacity="0"/><stop offset="0.16" stop-color="#6e6a7a"/><stop offset="0.3" stop-color="#9a8c8c"/><stop offset="0.65" stop-color="#a89488"/><stop offset="1" stop-color="#b4a08c"/>
 </linearGradient>
</defs>
<rect width="175" height="114" fill="#3b4764"/>
<g filter="url(#c1)">
 <ellipse cx="70" cy="5" rx="6" ry="9" fill="#b0a090"/>
 <ellipse cx="146" cy="17" rx="9" ry="6" fill="#a09288"/>
 <ellipse cx="157" cy="42" rx="5" ry="12" fill="#6a6070"/>
 <ellipse cx="168" cy="20" rx="8" ry="22" fill="#50364e"/>
 <circle cx="37" cy="30" r="34" fill="#5e2a40"/>
 <circle cx="106" cy="27" r="32" fill="#622a40"/>
</g>
<g filter="url(#c3)" fill="none" stroke-linecap="round">
 <path d="M6 42C3 22 18 3 40 2C58 2 72 16 72 34" stroke="#74283c" stroke-width="3.5"/>
 <path d="M8 50C14 62 30 68 46 66C58 64 66 56 70 46" stroke="#6c283c" stroke-width="3.5"/>
 <path d="M16 36C15 20 28 10 42 11C56 12 62 26 58 38" stroke="#78283c" stroke-width="3"/>
 <path d="M20 48C28 58 46 58 54 48" stroke="#66283c" stroke-width="2.5"/>
 <path d="M26 32C26 24 34 19 42 21C50 24 52 34 46 40C40 45 32 42 30 36" stroke="#72283c" stroke-width="2.5"/>
 <path d="M36 30C37 27 42 27 42 31" stroke="#7a2a3e" stroke-width="2"/>
 <path d="M76 34C74 16 88 2 108 1C126 2 138 16 138 34" stroke="#76283c" stroke-width="3.5"/>
 <path d="M80 44C86 56 100 62 114 60C126 58 134 50 136 42" stroke="#6c283c" stroke-width="3.5"/>
 <path d="M86 30C86 18 96 10 108 11C120 12 126 24 124 34" stroke="#7a283c" stroke-width="3"/>
 <path d="M90 42C96 52 114 54 122 44" stroke="#68283c" stroke-width="2.5"/>
 <path d="M96 30C96 22 104 18 110 20C118 23 118 34 112 38" stroke="#72283c" stroke-width="2.5"/>
 <path d="M62 50C66 56 72 58 78 56" stroke="#6e2a40" stroke-width="3"/>
</g>
<rect x="0" y="54" width="175" height="60" fill="url(#tbl)"/>
<g filter="url(#c3)" opacity="0.5">
 <path d="M0 70H175M0 92H175M0 104H175" stroke="#8c8080" stroke-width="1" fill="none"/>
</g>
<g filter="url(#c2)">
 <rect x="12.5" y="65.5" width="20" height="23" fill="#cfa874"/>
 <rect x="36.5" y="65.5" width="20" height="23" fill="#cfa874"/>
 <rect x="58.5" y="65.5" width="20" height="23" fill="#cfa874"/>
 <rect x="82.5" y="65.5" width="19.5" height="23" fill="#cfa874"/>
 <rect x="12.5" y="86.5" width="20" height="2" fill="#a88050"/>
 <rect x="36.5" y="86.5" width="20" height="2" fill="#a88050"/>
 <rect x="58.5" y="86.5" width="20" height="2" fill="#a88050"/>
 <rect x="82.5" y="86.5" width="19.5" height="2" fill="#a88050"/>
</g>
<g font-family="Liberation Sans" font-size="13" fill="#3a3430" filter="url(#c2)">
 <text x="18.5" y="82.5">L</text><text x="40.5" y="82.5">O</text><text x="62.5" y="82.5">V</text><text x="86.5" y="82.5">E</text>
</g>
<g font-family="Liberation Sans" font-size="5" fill="#3a3430">
 <text x="26" y="84">2</text><text x="51" y="84">1</text><text x="73" y="84">4</text>
</g>
<path d="M107 89C98 85.5 95 79 96.5 73C98 68 104 67 107 71.5C110 67.5 118.5 69 120.5 75.5C122 82 115 87 107 89Z" fill="#de2c38" filter="url(#c2)"/>
<path d="M101 72C103 71 105 72 105.5 74" stroke="#f06a70" stroke-width="1.2" fill="none"/>
<g filter="url(#c3)" fill="#8a2636">
 <ellipse cx="58" cy="100" rx="13" ry="2.5"/>
 <ellipse cx="147" cy="95" rx="13" ry="2"/>
</g>
</svg>

<!-- Photo 3: fingers -->
<svg viewBox="0 0 175 126" style="left:524px;top:337px;overflow:hidden" width="175" height="126">
<defs>
 <linearGradient id="rbg" x1="0" y1="0" x2="1" y2="0">
  <stop offset="0" stop-color="#c20e0e"/><stop offset="0.5" stop-color="#bc0c10"/><stop offset="0.74" stop-color="#a00c1c"/><stop offset="1" stop-color="#8c0a22"/>
 </linearGradient>
 <radialGradient id="rbg2" cx="0.22" cy="0.38" r="0.45">
  <stop offset="0" stop-color="#d01410" stop-opacity="0.8"/><stop offset="1" stop-color="#d01410" stop-opacity="0"/>
 </radialGradient>
 <filter id="f1" x="-20%" y="-20%" width="140%" height="140%"><feGaussianBlur stdDeviation="0.6"/></filter>
 <filter id="f2" x="-50%" y="-50%" width="200%" height="200%"><feGaussianBlur stdDeviation="1.5"/></filter>
 <clipPath id="fc"><path d="M61 126C61 90 62 50 64 32C66 20 73 15.5 80 15.5C88 15.5 95 21 97 32C97 20 98 10 105 6C110 4 120 4 126 8C131 12 132 18 132 24C134 60 136 95 137 126Z"/></clipPath>
</defs>
<rect width="175" height="126" fill="url(#rbg)"/>
<rect width="175" height="126" fill="url(#rbg2)"/>
<g filter="url(#f1)">
 <path d="M61 126C61 90 62 50 64 32C66 20 73 15.5 80 15.5C88 15.5 95 21 97 32C98 60 98 95 98 126Z" fill="#e6b49c"/>
 <path d="M97 126C97 90 96 50 97 22C98 10 105 5 115 5C125 5 131 12 132 24C134 60 136 95 137 126Z" fill="#ecbca2"/>
</g>
<g clip-path="url(#fc)" filter="url(#f2)">
 <ellipse cx="72" cy="60" rx="8" ry="10" fill="#d8a088" opacity="0.7"/>
 <ellipse cx="80" cy="110" rx="12" ry="8" fill="#d49880" opacity="0.7"/>
 <ellipse cx="120" cy="55" rx="9" ry="12" fill="#dca690" opacity="0.6"/>
 <ellipse cx="112" cy="100" rx="10" ry="9" fill="#f2cab4" opacity="0.7"/>
 <ellipse cx="85" cy="28" rx="6" ry="7" fill="#f2c8b0" opacity="0.7"/>
 <ellipse cx="118" cy="14" rx="7" ry="6" fill="#f4ccb4" opacity="0.7"/>
 <ellipse cx="70" cy="90" rx="6" ry="8" fill="#f0c6ae" opacity="0.6"/>
 <rect x="95.5" y="30" width="3" height="96" fill="#9a5040"/>
</g>
<path d="M98.5 92C92 86 84 80 84 73C84 68 88 66 91.5 66C95 66 97.5 68 98.5 71C99.5 68 102 66 106 66C110 66 114 68 114 73C114 80 106 86 98.5 92Z" fill="#c42a40" filter="url(#f1)"/>
<g fill="none" stroke="#3a2420" stroke-width="1.2" stroke-linecap="round">
 <path d="M75 45C78.5 48.5 85 48.5 88.5 44.5"/>
 <path d="M107 30.5C111 34.5 117 34.5 121 30"/>
 <path d="M73.5 33.5C75 32 77 32 78.5 33M85 33C86.5 31.5 88.5 31.5 90 33"/>
 <path d="M103.5 18.5C105 17 107 17 108.5 18M117 17.5C118.5 16 120.5 16 122 17.5"/>
</g>
<g fill="#2a2420">
 <circle cx="76.5" cy="35.3" r="1.4"/><circle cx="88" cy="34.5" r="1.4"/>
 <circle cx="105.8" cy="20.4" r="1.5"/><circle cx="119.8" cy="19.6" r="1.5"/>
</g>
<rect x="0" y="120" width="1" height="6" fill="#00ffff"/>
</svg>

<div class="t pt" style="left:267px;top:339px">未必能陪你走到最后。</div>
<div class="t pt" style="left:267px;top:470px;letter-spacing:-0.38px">一生一世一双人，一段感情长长久久，是人们心中憧憬美好的向往，谁</div>
<div class="t pt" style="left:267px;top:484px">不希望自己被和爱人白头到老？</div>
<div class="t pt" style="left:267px;top:614px">可相爱仅是一段感情的开始，也不意味着一切。</div>

<!-- Status bar -->
<div id="sbline" class="a"></div>
<div id="sb" class="a"></div>
<div class="a" style="left:89px;top:776px;width:436px;height:18px;background:#F1F1F1"></div>
<div class="a" style="left:667px;top:776px;width:46px;height:24px;background:#C6C6C6"></div>

<svg width="994" height="803" style="left:0;top:0">
<!-- proofing book -->
<g fill="none" stroke="#808080" stroke-width="1.1">
 <path d="M214.5 780.5H221.5V793.5H214.5Z"/>
 <path d="M221.5 780.5H230.5V793.5H221.5"/>
 <path d="M221.5 793.5L222.5 795"/>
 <path d="M223.5 787L225.5 789.5L229 783.5"/>
</g>
<!-- read mode -->
<g fill="none" stroke="#777" stroke-width="1.1">
 <path d="M636.5 780.5H651.5V793.5H636.5Z"/>
 <path d="M644 780V795"/>
 <path d="M638.5 783.5H642M638.5 786.5H642M638.5 789.5H642M646 783.5H649.5M646 786.5H649.5M646 789.5H649.5"/>
</g>
<!-- print layout -->
<g fill="none" stroke="#555" stroke-width="1.2">
 <path d="M682.5 779.5H698.5V794.5H682.5Z"/>
 <path d="M685 783H696M685 786H696M685 789H696M685 792H696" stroke-width="1"/>
</g>
<!-- web layout -->
<g fill="none" stroke="#777" stroke-width="1.1">
 <path d="M738 791.5H728.5V779.5H742.5V786"/>
 <path d="M731 782.5H740M731 785.5H738M731 788.5H735"/>
</g>
<circle cx="741.5" cy="790" r="4.3" fill="#777"/>
<path d="M739 788.5C740 790 742 791 744 791.5M740.5 793.5C741 791 742 789 744 787.5" stroke="#F3F3F3" stroke-width="0.9" fill="none"/>
<!-- zoom slider -->
<rect x="766" y="787" width="7" height="2.4" fill="#555"/>
<rect x="778" y="787.5" width="121" height="1" fill="#999"/>
<rect x="839" y="785" width="1" height="6" fill="#999"/>
<rect x="789" y="781" width="6" height="13" fill="#777"/>
<path d="M903 788H913M908 783V793" stroke="#555" stroke-width="2"/>
</svg>
<div class="t st" style="left:7px;top:780px">第 2 页，共</div>
<div class="t st" style="left:88.5px;top:780px;word-spacing:2px">2 页</div>
<div class="t st" style="left:141px;top:780px">75 个字</div>
<div class="t st" style="left:254px;top:780px">中文(中国)</div>
<div class="t st" style="left:926px;top:780px">26%</div>

</body></html>
